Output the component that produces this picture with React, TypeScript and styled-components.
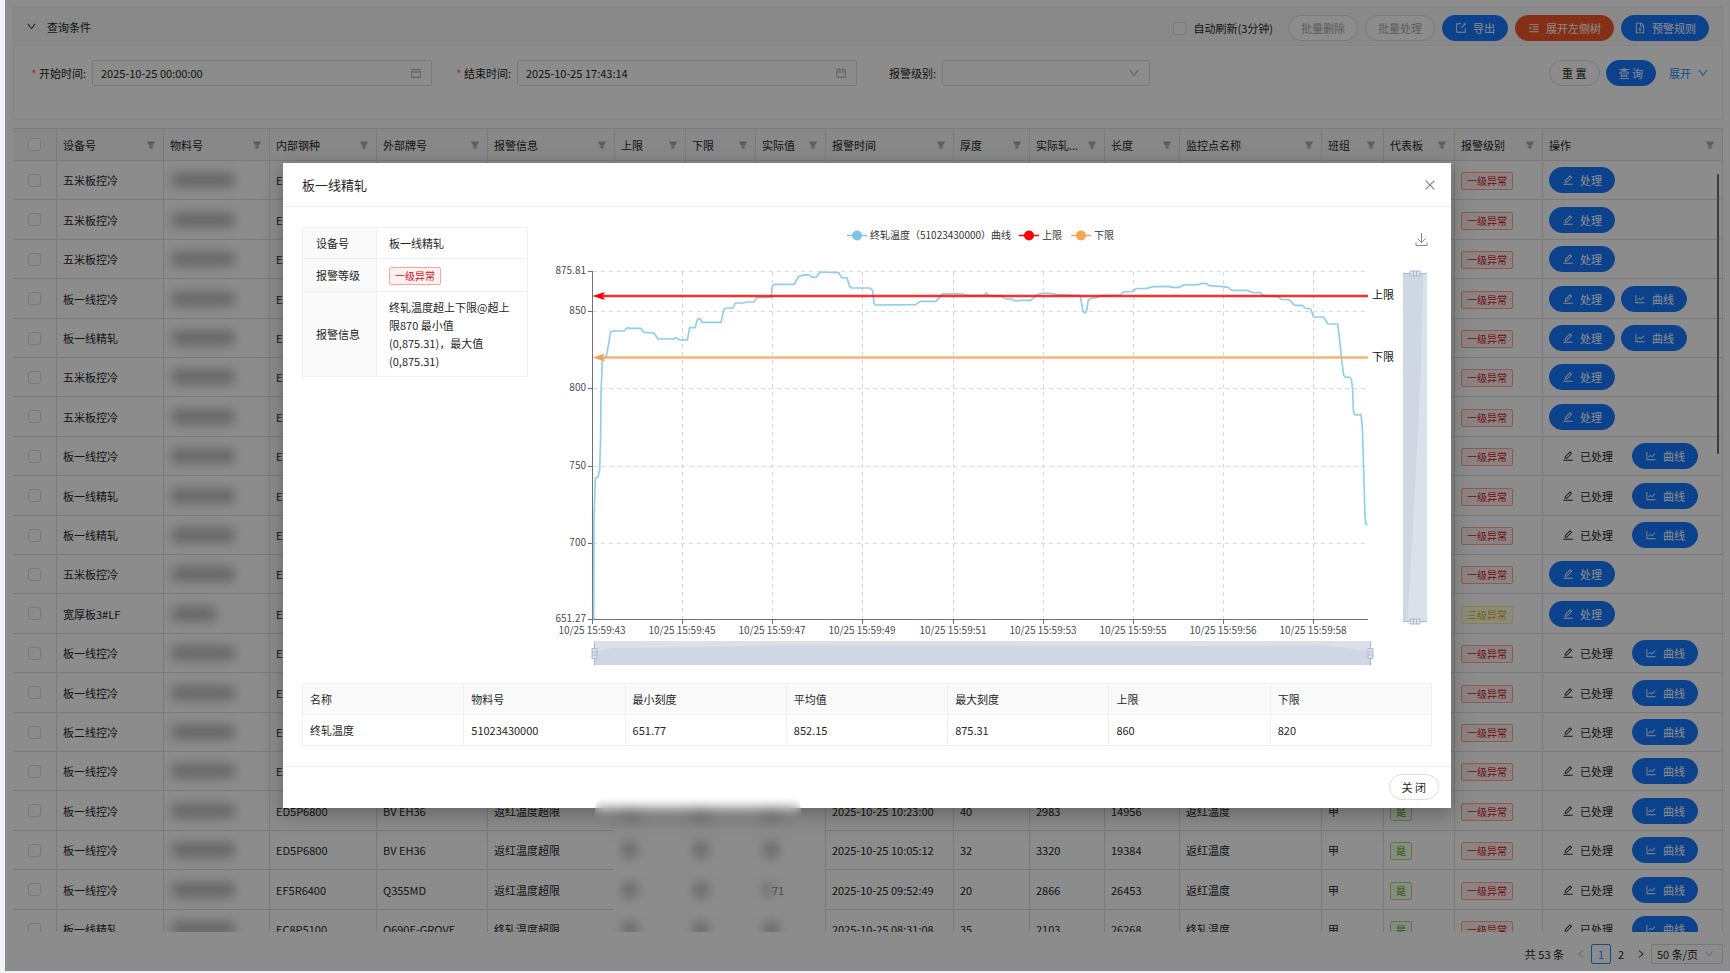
import React from "react";
import styled, { createGlobalStyle, css } from "styled-components";
import {
  AiFillFilter,
  AiOutlineCalendar,
  AiOutlineClose,
  AiOutlineDown,
  AiOutlineEdit,
  AiOutlineExport,
  AiOutlineFileExcel,
  AiOutlineLeft,
  AiOutlineLineChart,
  AiOutlineMenuUnfold,
  AiOutlineRight,
} from "react-icons/ai";

const FONT = '"Noto Sans CJK SC", "Noto Sans", sans-serif';

const GlobalStyle = createGlobalStyle`
  * { box-sizing: border-box; }
  body {
    margin: 0;
    overflow: hidden;
    background: #f0f2f5;
    color: #262626;
    font: 11px/18px ${FONT};
  }
  button, input, select { font: inherit; color: inherit; }
`;

const Shell = styled.div`
  height: 100vh;
  padding: 0 0 2px 5px;
`;

const Page = styled.main`
  position: relative;
  display: flex;
  flex-direction: column;
  height: 100%;
  padding: 7px 7px 7px 8px;
  background: #fff;
`;

/* ---------- query panel ---------- */

const QueryCard = styled.section`
  border: 1px solid #eeeeee;
  border-radius: 2px;
`;

const QueryHeader = styled.header`
  display: flex;
  align-items: center;
  justify-content: space-between;
  height: 38px;
  padding: 0 13px 0 12px;
  background: #fafafa;
  border-bottom: 1px solid #eeeeee;
`;

const QueryTitle = styled.h2`
  display: flex;
  align-items: center;
  gap: 10px;
  margin: 0;
  font-size: 11px;
  font-weight: 400;
`;

const Toolbar = styled.div`
  display: flex;
  align-items: center;
  gap: 7px;
  padding-top: 3px;
`;

const CheckLabel = styled.label`
  display: flex;
  align-items: center;
  gap: 7px;
  margin-right: 8px;
`;

const Check = styled.input.attrs({ type: "checkbox" })`
  appearance: none;
  display: block;
  width: 13px;
  height: 13px;
  margin: 0;
  background: #fff;
  border: 1px solid #dcdcdc;
  border-radius: 3px;
`;

type Tone = "primary" | "warn" | "plain" | "disabled" | "text";

const tones = {
  primary: css`background: #1677ff; border-color: #1677ff; color: #fff;`,
  warn: css`background: #f2572a; border-color: #f2572a; color: #fff;`,
  plain: css`background: #fff; border-color: #dedede;`,
  disabled: css`background: #fff; border-color: #dedede; color: #a9a9a9;`,
  text: css`background: transparent; border-color: transparent;`,
};

const Button = styled.button<{ $tone: Tone }>`
  display: inline-flex;
  align-items: center;
  justify-content: center;
  gap: 6px;
  height: 26px;
  padding: 0 12px;
  border: 1px solid;
  border-radius: 13px;
  white-space: nowrap;
  ${(p) => tones[p.$tone]}
  svg { font-size: 12px; }
`;

const QueryForm = styled.form`
  display: grid;
  grid-template-columns: 407fr 407fr 275fr 541fr;
  align-items: start;
  gap: 18px;
  height: 73px;
  padding: 14px 13px 0 11px;
`;

const Field = styled.div`
  display: flex;
  align-items: center;
  min-width: 0;
`;

const FieldLabel = styled.label<{ $required?: boolean }>`
  flex: none;
  width: 67px;
  padding-right: 6px;
  text-align: right;
  ${(p) => p.$required && css`&::before { content: "* "; color: #ff4d4f; }`}
`;

const InputBox = styled.div`
  display: flex;
  align-items: center;
  flex: 1;
  min-width: 0;
  height: 26px;
  padding: 0 9px 0 8px;
  border: 1px solid #dedede;
  border-radius: 2px;
  svg { flex: none; font-size: 12px; color: #a6a6a6; }
`;

const TextInput = styled.input`
  flex: 1;
  min-width: 0;
  padding: 0;
  border: 0;
  outline: 0;
  background: transparent;
`;

const Dropdown = styled.select`
  flex: 1;
  min-width: 0;
  padding: 0;
  border: 0;
  outline: 0;
  appearance: none;
  background: transparent;
`;

const FormActions = styled.div`
  display: flex;
  align-items: center;
  justify-content: flex-end;
  gap: 6px;
`;

const ExpandLink = styled.a`
  display: flex;
  align-items: center;
  gap: 6px;
  margin-left: 7px;
  color: #1890ff;
  text-decoration: none;
  svg { font-size: 12px; }
`;

/* ---------- data grid ---------- */

const GridViewport = styled.div`
  position: relative;
  flex: 1;
  min-height: 0;
  margin-top: 8px;
  overflow: hidden;
`;

const ScrollThumb = styled.div`
  position: absolute;
  top: 46px;
  right: 4px;
  width: 2px;
  height: 280px;
  border-radius: 1px;
  background: #6e6e6e;
`;

const Grid = styled.table`
  width: 100%;
  table-layout: fixed;
  border-collapse: separate;
  border-spacing: 0;
  border: 1px solid #e0e1ea;
  border-width: 1px 1px 0 0;
`;

const HeadCell = styled.th`
  height: 32px;
  padding: 0 7px 0 6px;
  background: #f8f8f9;
  border: 1px solid #dcdde6;
  border-width: 0 0 1px 0;
  font-weight: 400;
  text-align: left;
  & + & { border-left-width: 1px; }
`;

const HeadInner = styled.div`
  display: flex;
  align-items: center;
  justify-content: space-between;
  white-space: nowrap;
  svg { font-size: 10px; color: #a9a9a9; }
`;

const Row = styled.tr`
  height: 39px;
  &:nth-child(5n + 2), &:nth-child(5n + 4) { height: 40px; }
`;

const Cell = styled.td<{ $smudged?: boolean }>`
  padding: 0 6px;
  border: 1px solid #dcdde6;
  border-width: 0 0 1px 0;
  white-space: nowrap;
  & + & { border-left-width: 1px; }
  ${(p) => p.$smudged && css`&& { border-color: transparent; }`}
`;

const CheckSlot = styled.div`
  display: flex;
  justify-content: center;
`;

const Redacted = styled.span<{ $width: number }>`
  display: block;
  width: ${(p) => p.$width}px;
  height: 14px;
  margin-left: 2px;
  background: #b6b6b6;
  filter: blur(6px);
`;

const Actions = styled.div`
  display: flex;
  gap: 6px;
`;

const tagTones = {
  red: css`color: #cf1322; background: #fff1f0; border-color: #ffa39e;`,
  yellow: css`color: #d4b106; background: #feffe6; border-color: #f5ef7a;`,
  green: css`color: #389e0d; background: #f6ffed; border-color: #a5e072;`,
};

const Tag = styled.span<{ $tone: keyof typeof tagTones }>`
  display: inline-block;
  height: 18px;
  padding: 0 5px;
  border: 1px solid;
  border-radius: 2px;
  font-size: 10px;
  line-height: 16px;
  vertical-align: middle;
  ${(p) => tagTones[p.$tone]}
`;

const Pager = styled.nav`
  display: flex;
  align-items: center;
  justify-content: flex-end;
  height: 20px;
  margin-top: 12px;
`;

const PagerTotal = styled.span`
  margin-right: 7px;
`;

const PagerButton = styled.button<{ $current?: boolean; $muted?: boolean }>`
  display: flex;
  align-items: center;
  justify-content: center;
  width: 20px;
  height: 20px;
  padding: 0;
  background: transparent;
  border: 1px solid ${(p) => (p.$current ? "#1890ff" : "transparent")};
  border-radius: 2px;
  color: ${(p) => (p.$current ? "#1890ff" : p.$muted ? "#b0b0b0" : "#262626")};
  svg { font-size: 10px; }
`;

const PageSize = styled.div`
  display: flex;
  align-items: center;
  width: 72px;
  height: 20px;
  padding: 0 8px 0 5px;
  border: 1px solid #d9d9d9;
  border-radius: 2px;
  svg { flex: none; font-size: 10px; color: #a6a6a6; }
`;

/* ---------- dialog ---------- */

const Mask = styled.div`
  position: absolute;
  inset: 0;
  background: rgba(0, 0, 0, 0.45);
`;

const Dialog = styled.div`
  position: absolute;
  top: 163px;
  left: 278px;
  right: 279px;
  background: #fff;
  box-shadow: 0 5px 13px rgba(0, 0, 0, 0.2), 0 8px 24px 6px rgba(0, 0, 0, 0.08);
`;

const DialogHeader = styled.header`
  display: flex;
  align-items: center;
  justify-content: space-between;
  height: 44px;
  padding: 0 14px 0 19px;
  border-bottom: 1px solid #f0f0f0;
`;

const DialogTitle = styled.h1`
  margin: 0;
  font-size: 13px;
  font-weight: 400;
`;

const IconButton = styled.button`
  display: flex;
  padding: 0;
  border: 0;
  background: transparent;
  color: #808080;
  font-size: 14px;
`;

const DialogBody = styled.div`
  padding: 20px 19px;
`;

const Summary = styled.div`
  display: flex;
  align-items: flex-start;
  gap: 12px;
  margin-bottom: 12px;
`;

const Details = styled.table`
  flex: none;
  width: 226px;
  table-layout: fixed;
  border-collapse: collapse;
`;

const DetailLabel = styled.th`
  width: 74px;
  padding: 6px 13px;
  background: #fafafa;
  border: 1px solid #f0f0f0;
  font-weight: 400;
  text-align: left;
  white-space: nowrap;
`;

const DetailValue = styled.td`
  padding: 6px 12px;
  border: 1px solid #f0f0f0;
`;

const DetailRow = styled.tr`
  height: 31px;
`;

const Chart = styled.svg`
  display: block;
  flex: 1;
  min-width: 0;
  font-family: ${FONT};
`;

const Stats = styled.table`
  width: 100%;
  table-layout: fixed;
  border-collapse: collapse;
  th, td {
    height: 31px;
    padding: 0 7px;
    border: 1px solid #f0f0f0;
    font-weight: 400;
    text-align: left;
  }
  th { background: #fafafa; }
`;

const DialogFooter = styled.footer`
  display: flex;
  justify-content: flex-end;
  padding: 7px 12px 8px;
  border-top: 1px solid #f0f0f0;
`;

const EdgeSmudge = styled.div`
  position: absolute;
  left: 312px;
  bottom: -20px;
  width: 206px;
  height: 30px;
  border-radius: 10px;
  backdrop-filter: blur(6px);
`;

/* ---------- data ---------- */

const columns: { title: string; width?: number }[] = [
  { title: "设备号", width: 107 },
  { title: "物料号", width: 106 },
  { title: "内部钢种", width: 107 },
  { title: "外部牌号", width: 111 },
  { title: "报警信息", width: 127 },
  { title: "上限", width: 71 },
  { title: "下限", width: 70 },
  { title: "实际值", width: 70 },
  { title: "报警时间", width: 128 },
  { title: "厚度", width: 76 },
  { title: "实际轧...", width: 75 },
  { title: "长度", width: 75 },
  { title: "监控点名称", width: 142 },
  { title: "班组", width: 62 },
  { title: "代表板", width: 71 },
  { title: "报警级别", width: 88 },
  { title: "操作" },
];

interface Alarm {
  device: string;
  level?: "三级异常";
  handled?: boolean;
  curve?: boolean;
  steel?: string;
  grade?: string;
  message?: string;
  time?: string;
  size?: [string, string, string];
  point?: string;
  tail?: string;
}

const five = "五米板控冷";
const cool = "板一线控冷";
const finish = "板一线精轧";
const done = { handled: true, curve: true };

const alarms: Alarm[] = [
  { device: five },
  { device: five },
  { device: five },
  { device: cool, curve: true },
  { device: finish, curve: true },
  { device: five },
  { device: five },
  { device: cool, ...done },
  { device: finish, ...done },
  { device: finish, ...done },
  { device: five },
  { device: "宽厚板3#LF", level: "三级异常" },
  { device: cool, ...done },
  { device: cool, ...done },
  { device: "板二线控冷", ...done },
  { device: cool, ...done },
  { device: cool, ...done, steel: "ED5P6800", grade: "BV EH36", message: "返红温度超限", time: "2025-10-25 10:23:00", size: ["40", "2983", "14956"], point: "返红温度" },
  { device: cool, ...done, steel: "ED5P6800", grade: "BV EH36", message: "返红温度超限", time: "2025-10-25 10:05:12", size: ["32", "3320", "19384"], point: "返红温度" },
  { device: cool, ...done, steel: "EF5R6400", grade: "Q355MD", message: "返红温度超限", time: "2025-10-25 09:52:49", size: ["20", "2866", "26453"], point: "返红温度", tail: "71" },
  { device: finish, ...done, steel: "EC8P5100", grade: "Q690E-GROVE", message: "终轧温度超限", time: "2025-10-25 08:31:08", size: ["35", "2103", "26268"], point: "终轧温度" },
];

const SmudgedValue = styled.div`
  display: flex;
  align-items: center;
  color: #8a8a8a;
`;

function AlarmRow({ alarm }: { alarm: Alarm }) {
  const full = Boolean(alarm.time);
  return (
    <Row>
      <Cell>
        <CheckSlot><Check aria-label={alarm.device} /></CheckSlot>
      </Cell>
      <Cell>{alarm.device}</Cell>
      <Cell><Redacted $width={alarm.level ? 44 : 62} /></Cell>
      <Cell>{alarm.steel ?? "E"}</Cell>
      <Cell>{alarm.grade}</Cell>
      <Cell>{alarm.message}</Cell>
      {[0, 1, 2].map((i) => (
        <Cell key={i} $smudged={full}>
          {full && (
            <SmudgedValue>
              <Redacted $width={i === 2 && alarm.tail ? 8 : 14} />
              {i === 2 && alarm.tail}
            </SmudgedValue>
          )}
        </Cell>
      ))}
      <Cell>{alarm.time}</Cell>
      <Cell>{alarm.size?.[0]}</Cell>
      <Cell>{alarm.size?.[1]}</Cell>
      <Cell>{alarm.size?.[2]}</Cell>
      <Cell>{alarm.point}</Cell>
      <Cell>{full && "甲"}</Cell>
      <Cell>{full && <Tag $tone="green">是</Tag>}</Cell>
      <Cell>
        <Tag $tone={alarm.level ? "yellow" : "red"}>{alarm.level ?? "一级异常"}</Tag>
      </Cell>
      <Cell>
        <Actions>
          <Button $tone={alarm.handled ? "text" : "primary"}>
            <AiOutlineEdit />
            {alarm.handled ? "已处理" : "处理"}
          </Button>
          {alarm.curve && (
            <Button $tone="primary"><AiOutlineLineChart />曲线</Button>
          )}
        </Actions>
      </Cell>
    </Row>
  );
}

/* Temperature trace, in thirds of a chart pixel from the point (580, 250). */
const trace: [number, number][] = [
  [41, 1108], [42, 800], [46, 684], [54, 681], [59, 660], [62, 560], [63, 430], [67, 328], [79, 320], [86, 280],
  [92, 246], [97, 243], [132, 243], [143, 233], [150, 235], [182, 235], [192, 247], [222, 249], [234, 267],
  [280, 267], [288, 263], [300, 270], [322, 270], [329, 233], [345, 233], [353, 207], [360, 206], [366, 217],
  [423, 217], [432, 178], [440, 174], [459, 174], [466, 159], [490, 159], [500, 156], [522, 156], [532, 142],
  [573, 142], [577, 108], [584, 103], [643, 103], [655, 80], [675, 74], [688, 75], [697, 82], [710, 81],
  [720, 66], [776, 68], [785, 83], [801, 84], [808, 108], [815, 114], [870, 114], [878, 122], [882, 160],
  [886, 165], [1007, 164], [1020, 154], [1068, 154], [1088, 131], [1150, 132], [1157, 136], [1212, 136],
  [1219, 129], [1226, 136], [1262, 137], [1275, 146], [1295, 147], [1305, 153], [1325, 151], [1352, 151],
  [1365, 140], [1378, 131], [1405, 129], [1430, 134], [1500, 137], [1503, 150], [1509, 185], [1515, 189],
  [1520, 183], [1525, 150], [1535, 144], [1552, 143], [1560, 137], [1620, 135], [1630, 126], [1660, 124],
  [1668, 116], [1700, 115], [1720, 110], [1765, 109], [1780, 112], [1798, 112], [1810, 105], [1855, 104],
  [1865, 100], [1880, 101], [1888, 107], [1920, 109], [1945, 112], [1955, 121], [2003, 121], [2015, 127],
  [2040, 128], [2050, 136], [2095, 140], [2103, 148], [2127, 149], [2144, 166], [2167, 166], [2175, 174],
  [2192, 177], [2201, 201], [2231, 201], [2243, 222], [2273, 222], [2278, 260], [2284, 320], [2291, 376],
  [2296, 382], [2308, 381], [2314, 388], [2318, 420], [2320, 480], [2325, 494], [2336, 495], [2343, 493],
  [2347, 530], [2351, 660], [2355, 800], [2358, 823], [2363, 824],
];

const yTicks: [string, number][] = [
  ["875.81", 271], ["850", 311], ["800", 388], ["750", 466], ["700", 543], ["651.27", 619],
];
const xTicks: [string, number][] = [
  ["43", 592], ["45", 682], ["47", 772], ["49", 862], ["51", 953], ["53", 1043], ["55", 1133], ["56", 1223], ["58", 1313],
];

function LegendItem({ x, color, label }: { x: number; color: string; label: string }) {
  return (
    <g>
      <path d={`M${x} 235.5h20`} stroke={color} strokeWidth="1.5" />
      <circle cx={x + 10} cy="235.5" r="5" fill={color} />
      <text x={x + 23} y="239">{label}</text>
    </g>
  );
}

function Limit({ y, color, label }: { y: number; color: string; label: string }) {
  return (
    <g>
      <path d={`M600 ${y}H1368`} stroke={color} strokeWidth="2.4" opacity="0.82" />
      <path d={`M592.5 ${y}l12.5-4-2.5 4 2.5 4z`} fill={color} />
      <text x="1372" y={y + 3} fontSize="11" fill="#111">{label}</text>
    </g>
  );
}

function Handle({ x, y, turned }: { x: number; y: number; turned?: boolean }) {
  return (
    <g transform={`translate(${x} ${y})${turned ? " rotate(90)" : ""}`} stroke="#acb8d1" fill="#dde4ee">
      <path d="M0-12V12" />
      <path d="M-2.5-5h5v10h-5zM-2.5-1.5h5M-2.5 1.5h5" />
    </g>
  );
}

function TemperatureChart() {
  return (
    <Chart viewBox="540 227 892 444" role="img" aria-label="终轧温度曲线">
      <g fontSize="10" fill="#333">
        <LegendItem x={847} color="#7cc4e4" label="终轧温度（51023430000）曲线" />
        <LegendItem x={1019} color="#ff0000" label="上限" />
        <LegendItem x={1071} color="#f9a350" label="下限" />
      </g>

      <path d="M1421.5 233v9.500M1417.500 238.500l4 4 4-4M1416 242.500v3h11v-3" fill="none" stroke="#888" />

      <g stroke="#d9d9d9" strokeDasharray="4 4">
        {yTicks.slice(0, 5).map(([t, y]) => <path key={t} d={`M593 ${y + 0.5}H1368`} />)}
        {xTicks.slice(1).map(([t, x]) => <path key={t} d={`M${x + 0.5} 272V620`} />)}
      </g>

      <g stroke="#6e7079">
        <path d="M592.500 272V619.500H1368" fill="none" />
        {yTicks.map(([t, y]) => <path key={t} d={`M588 ${y + 0.5}h5`} />)}
        {xTicks.map(([t, x]) => <path key={t} d={`M${x + 0.5} 620v4`} />)}
      </g>

      <g fontSize="10" fill="#4c4d55">
        {yTicks.map(([t, y]) => <text key={t} x="586" y={y + 3} textAnchor="end">{t}</text>)}
        {xTicks.map(([t, x]) => (
          <text key={t} x={x} y="634" textAnchor="middle">{`10/25 15:59:${t}`}</text>
        ))}
      </g>

      <polyline
        transform="translate(580 250) scale(0.33333)"
        points={trace.map((p) => p.join(",")).join(" ")}
        fill="none"
        stroke="#8fcfe8"
        strokeWidth="5"
        strokeLinejoin="round"
      />
      <Limit y={296} color="#ff0000" label="上限" />
      <Limit y={357.5} color="#f9a350" label="下限" />

      <rect x="1403" y="273" width="24" height="349" fill="#dae1eb" />
      <path d="M1403 273h20.500L1420 390 1412 545 1407 622h-4z" fill="#cfd7e2" />
      <Handle x={1415} y={273.5} turned />
      <Handle x={1415} y={621.5} turned />

      <rect x="594" y="641" width="777" height="24" fill="#dae1eb" />
      <path d="M594 665v-10l6-5 12-2 90-1 80-2 420 1 120-1 25 3 24 3v14z" fill="#cfd7e2" />
      <Handle x={594.5} y={653.5} />
      <Handle x={1370.5} y={653.5} />
    </Chart>
  );
}

const stats: [string, string][] = [
  ["名称", "终轧温度"],
  ["物料号", "51023430000"],
  ["最小刻度", "651.77"],
  ["平均值", "852.15"],
  ["最大刻度", "875.31"],
  ["上限", "860"],
  ["下限", "820"],
];

function CurveDialog() {
  return (
    <Dialog role="dialog" aria-labelledby="dialog-title">
      <DialogHeader>
        <DialogTitle id="dialog-title">板一线精轧</DialogTitle>
        <IconButton aria-label="关闭"><AiOutlineClose /></IconButton>
      </DialogHeader>
      <DialogBody>
        <Summary>
          <Details>
            <tbody>
              <DetailRow>
                <DetailLabel scope="row">设备号</DetailLabel>
                <DetailValue>板一线精轧</DetailValue>
              </DetailRow>
              <DetailRow>
                <DetailLabel scope="row">报警等级</DetailLabel>
                <DetailValue><Tag $tone="red">一级异常</Tag></DetailValue>
              </DetailRow>
              <DetailRow>
                <DetailLabel scope="row">报警信息</DetailLabel>
                <DetailValue>终轧温度超上下限@超上限870 最小值<br />(0,875.31)，最大值<br />(0,875.31)</DetailValue>
              </DetailRow>
            </tbody>
          </Details>
          <TemperatureChart />
        </Summary>
        <Stats>
          <thead>
            <tr>{stats.map(([name]) => <th key={name} scope="col">{name}</th>)}</tr>
          </thead>
          <tbody>
            <tr>{stats.map(([name, value]) => <td key={name}>{value}</td>)}</tr>
          </tbody>
        </Stats>
      </DialogBody>
      <DialogFooter>
        <Button $tone="plain">关 闭</Button>
      </DialogFooter>
      <EdgeSmudge />
    </Dialog>
  );
}

export default function App() {
  return (
    <Shell>
      <GlobalStyle />
      <Page>
        <QueryCard>
          <QueryHeader>
            <QueryTitle><AiOutlineDown />查询条件</QueryTitle>
            <Toolbar>
              <CheckLabel><Check />自动刷新(3分钟)</CheckLabel>
              <Button $tone="disabled" disabled>批量删除</Button>
              <Button $tone="disabled" disabled>批量处理</Button>
              <Button $tone="primary"><AiOutlineExport />导出</Button>
              <Button $tone="warn"><AiOutlineMenuUnfold />展开左侧树</Button>
              <Button $tone="primary"><AiOutlineFileExcel />预警规则</Button>
            </Toolbar>
          </QueryHeader>
          <QueryForm onSubmit={(e) => e.preventDefault()}>
            <Field>
              <FieldLabel $required htmlFor="start">开始时间:</FieldLabel>
              <InputBox>
                <TextInput id="start" defaultValue="2025-10-25 00:00:00" />
                <AiOutlineCalendar />
              </InputBox>
            </Field>
            <Field>
              <FieldLabel $required htmlFor="end">结束时间:</FieldLabel>
              <InputBox>
                <TextInput id="end" defaultValue="2025-10-25 17:43:14" />
                <AiOutlineCalendar />
              </InputBox>
            </Field>
            <Field>
              <FieldLabel htmlFor="level">报警级别:</FieldLabel>
              <InputBox>
                <Dropdown id="level" defaultValue=""><option value="" /></Dropdown>
                <AiOutlineDown />
              </InputBox>
            </Field>
            <FormActions>
              <Button $tone="plain" type="reset">重 置</Button>
              <Button $tone="primary" type="submit">查 询</Button>
              <ExpandLink href="#expand">展开<AiOutlineDown /></ExpandLink>
            </FormActions>
          </QueryForm>
        </QueryCard>

        <GridViewport>
          <Grid>
            <colgroup>
              <col width={43} />
              {columns.map((c) => <col key={c.title} width={c.width} />)}
            </colgroup>
            <thead>
              <tr>
                <HeadCell><CheckSlot><Check aria-label="全选" /></CheckSlot></HeadCell>
                {columns.map((c) => (
                  <HeadCell key={c.title} scope="col">
                    <HeadInner>{c.title}<AiFillFilter /></HeadInner>
                  </HeadCell>
                ))}
              </tr>
            </thead>
            <tbody>
              {alarms.map((alarm, i) => <AlarmRow key={i} alarm={alarm} />)}
            </tbody>
          </Grid>
          <ScrollThumb />
        </GridViewport>

        <Pager aria-label="分页">
          <PagerTotal>共 53 条</PagerTotal>
          <PagerButton $muted aria-label="上一页"><AiOutlineLeft /></PagerButton>
          <PagerButton $current>1</PagerButton>
          <PagerButton>2</PagerButton>
          <PagerButton aria-label="下一页"><AiOutlineRight /></PagerButton>
          <PageSize>
            <Dropdown aria-label="每页条数"><option>50 条/页</option></Dropdown>
            <AiOutlineDown />
          </PageSize>
        </Pager>

        <Mask />
        <CurveDialog />
      </Page>
    </Shell>
  );
}
